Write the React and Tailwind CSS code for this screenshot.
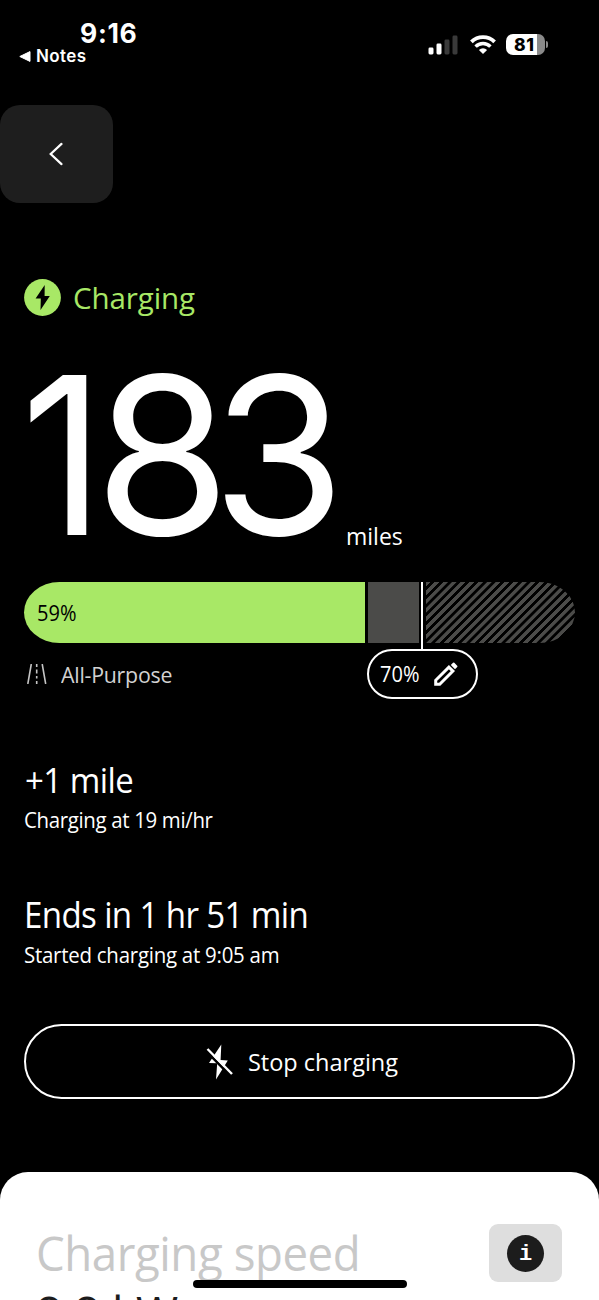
import React from 'react';

function StatusBar() {
  return (
    <header className="flex h-[105px] shrink-0 justify-between pl-[19px] pr-[51px]">
      <div className="flex flex-col font-['Inter',sans-serif] text-white">
        <div className="mt-[20px] pl-[61px] text-[26.5px] font-bold leading-[27px] tracking-[0.7px]">9:16</div>
        <div className="flex items-center gap-[5px] pt-px">
          <svg className="h-[11px] w-[12px]" viewBox="0 0 12 11">
            <path d="M0.8 5.5 L11 0.6 V10.4 Z" fill="#fff" stroke="#fff" strokeLinejoin="round" />
          </svg>
          <span className="text-[17px] font-semibold leading-[17px] tracking-[0.4px]">Notes</span>
        </div>
      </div>
      <div className="mt-[34px] flex h-[21px] items-center">
        <svg className="h-[20px] w-[31px]" viewBox="0 0 31 20">
          <rect x="0.5" y="12.5" width="5" height="7" rx="1.4" fill="#fff" />
          <rect x="8.5" y="8.5" width="5" height="11" rx="1.4" fill="#fff" />
          <rect x="16.5" y="4.5" width="5" height="15" rx="1.4" fill="#3a3a3a" />
          <rect x="24.5" y="0.5" width="5" height="19" rx="1.4" fill="#3a3a3a" />
        </svg>
        <svg className="ml-[11px] h-[19px] w-[26px]" viewBox="0 0 26 19" fill="none" stroke="#fff">
          <path d="M1.4 6.8 A16.5 16.5 0 0 1 24.6 6.8" strokeWidth="3.8" />
          <path d="M5.6 11.6 A10.3 10.3 0 0 1 20.4 11.6" strokeWidth="3.4" />
          <path d="M13 19 L8.9 14.9 A6.2 6.2 0 0 1 17.1 14.9 Z" fill="#fff" stroke="none" />
        </svg>
        <div className="ml-[10px] flex h-[21px] w-[39px] items-center rounded-[7px] bg-[linear-gradient(to_right,#fff_31px,#8a8a8a_31px)] pl-[8px] font-['Inter',sans-serif] text-[17.5px] font-extrabold leading-[21px] tracking-[0.6px] text-black">
          81
        </div>
        <div className="ml-[1px] h-[7px] w-[2px] rounded-r-full bg-[#8a8a8a]" />
      </div>
    </header>
  );
}

function ChargeBar() {
  return (
    <section className="mt-[34px] flex flex-col">
      <div className="flex h-[61px] w-[551px]">
        <div className="flex w-[341px] items-center bg-[#a8e866] pb-px pl-[13px] text-black [border-radius:36px_0_0_36px/31px_0_0_31px]">
          <span className="origin-left scale-x-[0.91] text-[22px] leading-[28px]">59%</span>
        </div>
        <div className="ml-[3px] w-[51px] bg-[#4b4b49]" />
        <div className="ml-[2px] h-[68px] w-[2px] bg-white" />
        <div className="ml-[3px] flex-1 bg-[repeating-linear-gradient(135deg,#4b4b49_0px,#4b4b49_3px,#000_3.4px,#000_5.8px,#4b4b49_6.2px)] [border-radius:0_36px_36px_0/0_31px_31px_0]" />
      </div>
      <div className="mt-[6px] flex h-[50px] w-[551px]">
        <div className="flex w-[343px] items-center gap-[14px] pl-[3px] text-[#d2d2d2]">
          <svg className="h-[20px] w-[20px]" viewBox="0 0 20 20" stroke="#c4c4c4" strokeWidth="1.6" fill="none">
            <path d="M4.3 0 L0.8 20 M15.2 0 L18.7 20" />
            <path d="M9.7 0 V3 M9.7 5.5 V9.5 M9.7 12 V14.5 M9.7 17 V20" />
          </svg>
          <span className="origin-left scale-x-[0.97] text-[22px] leading-[28px] tracking-[-0.25px]">All-Purpose</span>
        </div>
        <button className="flex w-[111px] items-center rounded-[25px] border-2 border-white pl-[11px] text-left">
          <span className="mb-[2px] w-[54px] origin-left scale-x-[0.91] text-[22px] leading-[28px]">70%</span>
          <svg className="h-[24px] w-[24px]" viewBox="0 0 24 24">
            <path d="M1.7 22.3 V18.3 L14.9 5.1 L18.9 9.1 L5.7 22.3 Z" fill="none" stroke="#fff" strokeWidth="3" />
            <path d="M16.8 3 L19 0.8 Q19.6 0.2 20.3 0.8 L23.2 3.7 Q23.8 4.4 23.2 5.1 L21 7.2 Z" fill="#fff" />
          </svg>
        </button>
      </div>
    </section>
  );
}

function Stat({ children, note }) {
  return (
    <div className="flex h-[134px] flex-col items-start">
      <div className="h-[46px]">{children}</div>
      {note}
    </div>
  );
}

function SpeedSheet() {
  return (
    <section className="mt-[73px] flex h-[128px] shrink-0 justify-between overflow-hidden rounded-t-[28px] bg-white pl-[36px] pr-[37px]">
      <div className="flex flex-col whitespace-nowrap text-[48px] leading-[60px]">
        <div className="mt-[51px] h-[64px] origin-left scale-x-[0.95] tracking-[-0.45px] text-[#c8c8c8]">Charging speed</div>
        <div className="origin-left scale-x-[0.95] text-[#1c1c1c]">8.8 kW</div>
      </div>
      <button className="mt-[52px] flex h-[58px] w-[73px] shrink-0 items-center justify-center rounded-[9px] bg-[#dedede]">
        <span className="flex h-[37px] w-[37px] items-center justify-center rounded-full bg-[#1c1c1c] pt-[4px] font-['Liberation_Mono',monospace] text-[22px] font-bold leading-none text-white">
          i
        </span>
      </button>
    </section>
  );
}

export default function App() {
  return (
    <div className="relative flex h-[1300px] w-[599px] flex-col overflow-hidden bg-black font-['Open_Sans',sans-serif] text-white">
      <StatusBar />
      <button className="flex h-[98px] w-[113px] shrink-0 items-center justify-center rounded-[20px] bg-[#1e1e1e] pr-px">
        <svg className="h-[24px] w-[14px]" viewBox="0 0 14 24" fill="none" stroke="#fff" strokeWidth="2.2" strokeLinecap="round">
          <path d="M12.5 1.9 L1.7 12 L12.5 22.1" />
        </svg>
      </button>

      <main className="flex flex-col pl-[24px] pr-[24px] pt-[76px]">
        <div className="flex h-[37px] items-center gap-[12px] text-[#a8e866]">
          <svg className="h-[37px] w-[37px]" viewBox="0 0 37 37">
            <circle cx="18.5" cy="18.5" r="18.4" fill="#a8e866" />
            <path d="M20.7 6 L11.6 19.5 H16.8 L16.5 31 L25.8 17 H20.6 Z" fill="#000" />
          </svg>
          <span className="text-[29.5px] leading-[37px] tracking-[-0.1px]">Charging</span>
        </div>

        <div className="mt-[59px] flex h-[173px]">
          <div className="-ml-[3px] flex w-[325px] font-['Inter',sans-serif] text-[220px] leading-[160px]">
            <span className="origin-left scale-x-[0.93] tracking-[-16px]">1</span>
            <span className="tracking-[-19px]">8</span>
            <span className="origin-left scale-x-[0.98]">3</span>
          </div>
          <div className="mt-[149px] text-[23px] leading-[24px]">miles</div>
        </div>

        <ChargeBar />

        <div className="mt-[60px] flex h-[265px] flex-col whitespace-nowrap">
          <Stat note={<div className="mt-px origin-left scale-x-[0.95] text-[21.5px] leading-[28px] tracking-[-0.35px]">Charging at 19 mi/hr</div>}>
            <div className="ml-px origin-left scale-x-[0.93] text-[35.5px] leading-[40px] tracking-[-0.6px]">+1 mile</div>
          </Stat>
          <Stat note={<div className="mt-[3px] origin-left scale-x-[0.95] text-[21.5px] leading-[28px] tracking-[-0.25px]">Started charging at 9:05 am</div>}>
            <div className="mt-[3px] origin-left scale-x-[0.92] text-[36px] leading-[40px] tracking-[-0.7px]">Ends in 1 hr 51 min</div>
          </Stat>
        </div>

        <button className="flex h-[75px] w-[551px] items-center justify-center gap-[15px] rounded-full border-2 border-white pl-[5px]">
          <svg className="h-[36px] w-[27px]" viewBox="0 0 27 36">
            <path d="M15.3 0.5 L14.6 16 L21.8 16.4 L10 35.5 L11.2 19.2 L3 18.9 Z" fill="#fff" />
            <path d="M0 7 L24 31.4" stroke="#000" strokeWidth="2.6" />
            <path d="M1.5 5 L26 30" stroke="#fff" strokeWidth="2.4" />
          </svg>
          <span className="pt-px text-[23.5px] leading-[30px]">Stop charging</span>
        </button>
      </main>

      <SpeedSheet />
      <div className="absolute bottom-[12px] left-[193px] h-[8px] w-[214px] rounded-full bg-black" />
    </div>
  );
}
